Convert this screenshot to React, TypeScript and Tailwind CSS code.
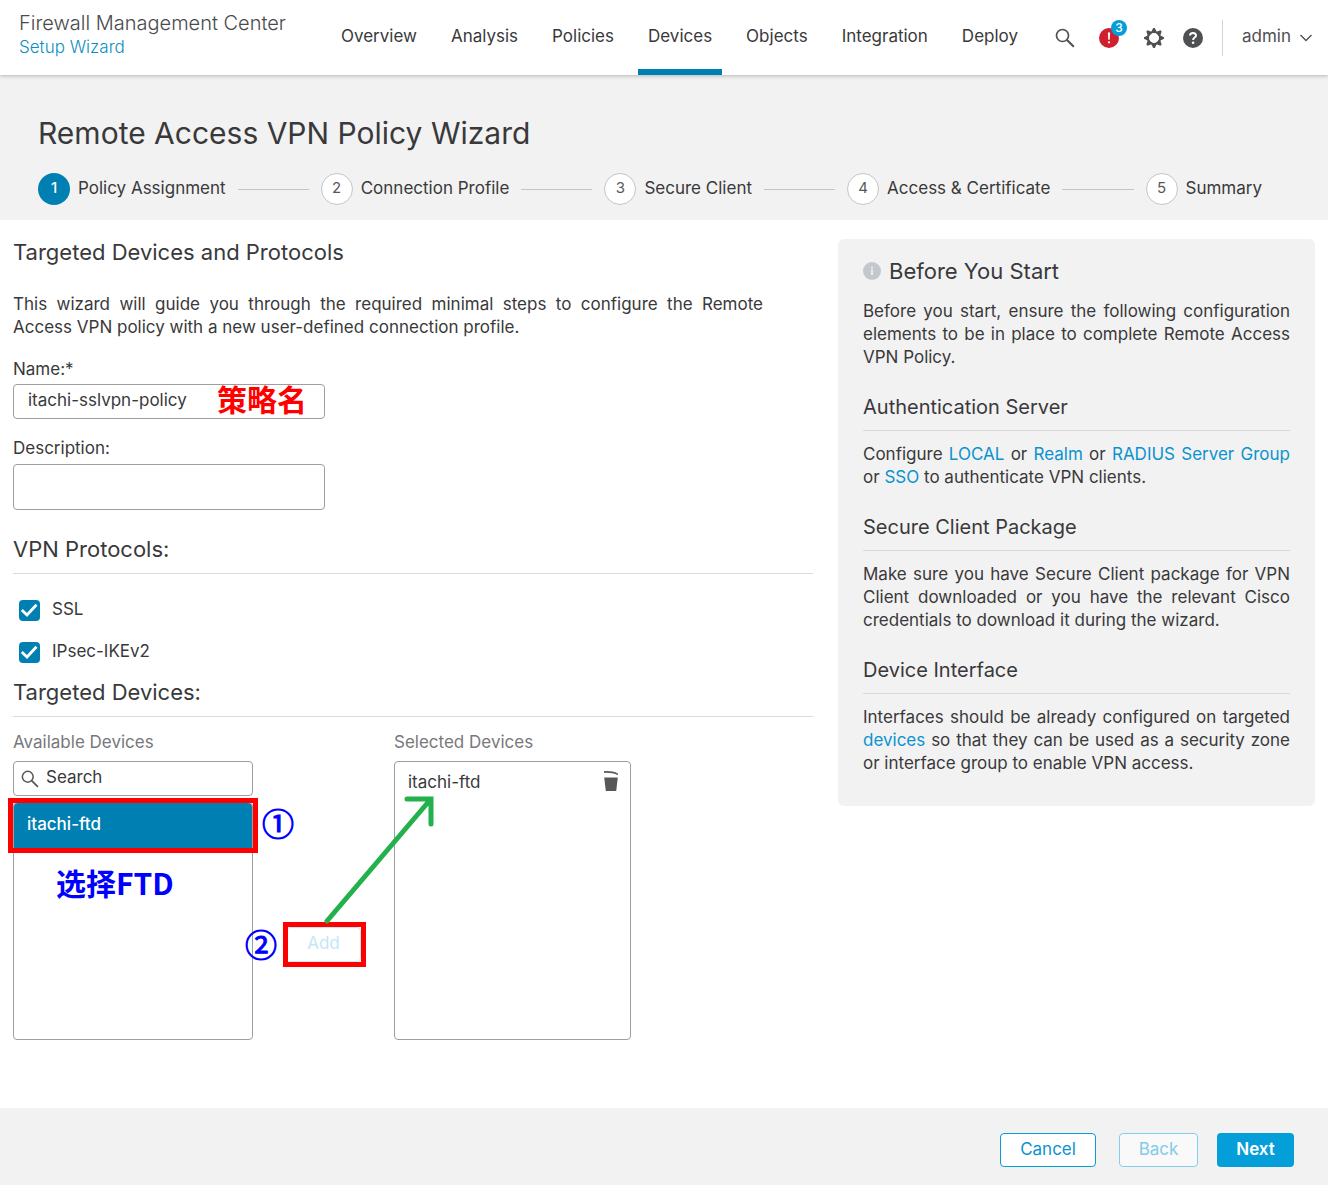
import React from "react";

const navItems = ["Overview", "Analysis", "Policies", "Devices", "Objects", "Integration", "Deploy"];
const steps = ["Policy Assignment", "Connection Profile", "Secure Client", "Access & Certificate", "Summary"];

function SearchIcon({ className }: { className: string }) {
  return (
    <svg viewBox="0 0 20 20" className={className} fill="none" stroke="currentColor" aria-hidden="true">
      <circle cx="7.5" cy="7.5" r="6" strokeWidth="1.7" />
      <path d="M11.8 11.8 18.8 18.8" strokeWidth="2" />
    </svg>
  );
}

function AlertIcon() {
  return (
    <svg viewBox="0 0 20 20" className="size-5" aria-hidden="true">
      <circle cx="10" cy="10" r="10" fill="#cf2030" />
      <path d="M8.9 4.5h2.2l-.4 7.3H9.3z" fill="#fff" />
      <circle cx="10" cy="14.3" r="1.1" fill="#fff" />
    </svg>
  );
}

function GearIcon() {
  return (
    <svg viewBox="0 0 20 20" className="size-5" fill="currentColor" aria-hidden="true">
      <g>
        {[0, 45, 90, 135, 180, 225, 270, 315].map((a) => (
          <path key={a} d="M9.2 0h1.6l2.5 5H6.7z" transform={`rotate(${a} 10 10)`} />
        ))}
      </g>
      <circle cx="10" cy="10" r="5.8" fill="none" stroke="currentColor" strokeWidth="1.8" />
      <circle cx="10" cy="10" r="4.7" fill="#fff" />
    </svg>
  );
}

function HelpIcon() {
  return (
    <svg viewBox="0 0 20 20" className="size-5" aria-hidden="true">
      <circle cx="10" cy="10" r="10" fill="currentColor" />
      <path d="M7 7.6C7 5.8 8.3 4.9 10 4.9s3 .9 3 2.5c0 2.2-2.9 2.2-2.9 4.6" fill="none" stroke="#fff" strokeWidth="2" />
      <circle cx="10.1" cy="14.8" r="1.3" fill="#fff" />
    </svg>
  );
}

function InfoIcon() {
  return (
    <svg viewBox="0 0 18 18" className="size-[18px]" aria-hidden="true">
      <circle cx="9" cy="9" r="9" fill="#c4c7cc" />
      <path d="M8.1 7.5h1.8V13H8.1zM8.1 4.8h1.8v1.6H8.1z" fill="#f2f2f2" />
    </svg>
  );
}

function TrashIcon() {
  return (
    <svg viewBox="0 0 16 20" className="h-5 w-4" fill="currentColor" aria-hidden="true">
      <path d="M1 0.2C6-.2 11 .6 15 2.4v1.5C11 2.4 6 1.6 1 1.9z" />
      <path d="M1.2 6.6h13.6L13.2 20H2.8z" />
    </svg>
  );
}

function Protocol({ id, label }: { id: string; label: string }) {
  return (
    <div className="flex h-[21px] items-center gap-3">
      <span className="grid size-[21px]">
        <input
          id={id}
          type="checkbox"
          defaultChecked
          className="col-start-1 row-start-1 size-[21px] appearance-none rounded bg-[#0080b2]"
        />
        <svg viewBox="0 0 21 21" className="pointer-events-none col-start-1 row-start-1 size-[21px]" aria-hidden="true">
          <path d="M2.8 10 8 15 17.5 4.8" fill="none" stroke="#fff" strokeWidth="2.8" />
        </svg>
      </span>
      <label htmlFor={id} className="pb-0.5">
        {label}
      </label>
    </div>
  );
}

function SectionTitle({ children }: { children: React.ReactNode }) {
  return <h2 className="border-b border-[#dadbdd] pb-[10px] text-[22px] leading-7">{children}</h2>;
}

function HelpSection({ title, children }: { title: string; children: React.ReactNode }) {
  return (
    <section className="mt-[26px]">
      <h3 className="border-b border-[#d8d9db] pb-[11px] text-[20px] leading-6">{title}</h3>
      <p className="mt-3 text-justify">{children}</p>
    </section>
  );
}

function Link({ children }: { children: React.ReactNode }) {
  return (
    <a href="#" className="text-[#0a93cf]">
      {children}
    </a>
  );
}

export default function App() {
  return (
    <div className="min-h-screen bg-white font-['Inter','Noto_Sans_CJK_SC',sans-serif] text-[17px] leading-[23px] text-[#39393b]">
      <header className="relative flex h-[75px] bg-white pr-4 pl-[19px] shadow-[0_1px_4px_rgba(0,0,0,0.25)]">
        <div className="pt-[10px]">
          <div className="text-[20px] leading-[26px] font-light text-[#4a4a4c]">Firewall Management Center</div>
          <a href="#" className="block leading-[22px] font-light text-[#0a8fc4]">
            Setup Wizard
          </a>
        </div>
        <nav className="ml-auto flex gap-[14px]">
          {navItems.map((item) => (
            <a
              key={item}
              href="#"
              className={
                item === "Devices"
                  ? "border-b-[6px] border-[#0080b2] px-[10px] pt-[25px]"
                  : "border-b-[6px] border-transparent px-[10px] pt-[25px]"
              }
            >
              {item}
            </a>
          ))}
        </nav>
        <div className="ml-[27px] flex h-[75px] items-center text-[#4f5052]">
          <button type="button" aria-label="Search">
            <SearchIcon className="size-5" />
          </button>
          <button type="button" aria-label="Notifications" className="relative ml-6">
            <AlertIcon />
            <span className="absolute -top-[8px] left-[12px] size-4 rounded-full bg-[#049fd9] text-center text-[12px] leading-4 font-medium text-white">
              3
            </span>
          </button>
          <button type="button" aria-label="Settings" className="ml-[25px]">
            <GearIcon />
          </button>
          <button type="button" aria-label="Help" className="ml-[19px]">
            <HelpIcon />
          </button>
          <button type="button" className="ml-[19px] flex h-9 items-center gap-[9px] border-l border-[#d4d5d7] pl-[19px]">
            <span className="pb-0.5">admin</span>
            <svg viewBox="0 0 12 8" className="h-2 w-3" fill="none" stroke="currentColor" strokeWidth="1.3" aria-hidden="true">
              <path d="M.5 1 6 6.5 11.5 1" />
            </svg>
          </button>
        </div>
      </header>

      <div className="bg-[#f2f2f2] px-[38px] pt-[38px] pb-[15px]">
        <h1 className="text-[30px] leading-10">Remote Access VPN Policy Wizard</h1>
        <ol className="mt-5 mr-7 flex items-center">
          {steps.map((step, i) => (
            <React.Fragment key={step}>
              {i > 0 && <li role="presentation" className="mx-3 h-px flex-1 bg-[#c4c5c7]" />}
              <li className="flex items-center gap-2">
                <span
                  className={
                    i === 0
                      ? "size-8 rounded-full bg-[#0080b2] text-center text-[15px] leading-[30px] font-medium text-white"
                      : "size-8 rounded-full border border-[#c4c5c7] bg-white text-center text-[15px] leading-[28px] text-[#58585b]"
                  }
                >
                  {i + 1}
                </span>
                <span className="pb-0.5">{step}</span>
              </li>
            </React.Fragment>
          ))}
        </ol>
      </div>

      <main className="grid grid-cols-[minmax(0,1fr)_477px] items-start gap-[25px] px-[13px] pt-[19px] pb-[68px]">
        <div>
          <h2 className="text-[22px] leading-[26px]">Targeted Devices and Protocols</h2>
          <p className="mt-7 max-w-[750px] text-justify">
            This wizard will guide you through the required minimal steps to configure the Remote Access VPN policy
            with a new user-defined connection profile.
          </p>

          <label htmlFor="name" className="mt-[19px] block">
            Name:*
          </label>
          <div className="relative mt-[3px] w-[312px]">
            <input
              id="name"
              type="text"
              defaultValue="itachi-sslvpn-policy"
              className="block h-[35px] w-full rounded border border-[#9e9ea2] bg-white px-[14px] pb-1"
            />
            <span className="absolute top-0 left-[204px] text-[30px] leading-8 font-bold text-[#ff0000]">策略名</span>
          </div>

          <label htmlFor="description" className="mt-[18px] block">
            Description:
          </label>
          <textarea
            id="description"
            className="mt-1 block h-[46px] w-[312px] resize-none rounded border border-[#9e9ea2] bg-white px-[14px] py-2"
          />

          <div className="mt-[25px]">
            <SectionTitle>VPN Protocols:</SectionTitle>
          </div>
          <div className="mt-[26px] flex flex-col gap-[21px] pl-[6px]">
            <Protocol id="ssl" label="SSL" />
            <Protocol id="ikev2" label="IPsec-IKEv2" />
          </div>

          <div className="mt-[15px]">
            <SectionTitle>Targeted Devices:</SectionTitle>
          </div>

          <div className="relative mt-[14px] flex">
            <div className="w-[240px]">
              <label htmlFor="device-search" className="block text-[#77787b]">
                Available Devices
              </label>
              <div className="mt-[7px] flex h-[35px] items-center gap-[7px] rounded border border-[#9e9ea2] pl-[7px] text-[#58585b]">
                <SearchIcon className="size-[18px]" />
                <input
                  id="device-search"
                  type="search"
                  placeholder="Search"
                  className="min-w-0 flex-1 bg-transparent pb-0.5 placeholder:text-[#39393b]"
                />
              </div>
              <div className="mt-[6px] h-[238px] rounded border border-[#9e9ea2]">
                <button
                  type="button"
                  className="block h-[46px] w-full rounded-t-sm bg-[#0080b2] px-[13px] pb-1 text-left font-medium text-white"
                >
                  itachi-ftd
                </button>
              </div>
            </div>

            <div className="flex w-[141px] justify-center pt-[196px]">
              <button
                type="button"
                disabled
                className="h-[35px] w-[75px] rounded border border-[#c9e9f6] bg-white pb-0.5 text-[#c3e7f6]"
              >
                Add
              </button>
            </div>

            <div className="w-[237px]">
              <div className="text-[#77787b]">Selected Devices</div>
              <div className="mt-[7px] h-[279px] rounded border border-[#9e9ea2]">
                <div className="flex items-start justify-between pt-[9px] pr-[11px] pl-[13px]">
                  itachi-ftd
                  <button type="button" aria-label="Remove itachi-ftd" className="text-[#58585b]">
                    <TrashIcon />
                  </button>
                </div>
              </div>
            </div>

            <div className="pointer-events-none absolute top-[67px] -left-[5px] h-[55px] w-[250px] border-[5px] border-[#ff0000]" />
            <div className="pointer-events-none absolute top-[191px] left-[270px] h-[45px] w-[83px] border-[5px] border-[#ff0000]" />
            <span className="absolute top-[75px] left-[249px] font-['Noto_Sans_CJK_SC',sans-serif] text-[32px] leading-8 text-[#0000ff] [-webkit-text-stroke:1px_#0000ff]">
              ①
            </span>
            <span className="absolute top-[196px] left-[232px] font-['Noto_Sans_CJK_SC',sans-serif] text-[32px] leading-8 text-[#0000ff] [-webkit-text-stroke:1px_#0000ff]">
              ②
            </span>
            <span className="absolute top-[135px] left-[43px] font-['Noto_Sans_CJK_SC',sans-serif] text-[30px] leading-8 font-bold text-[#0000ff]">
              选择FTD
            </span>
            <svg
              viewBox="0 0 112 130"
              className="pointer-events-none absolute top-[63px] left-[310px] h-[130px] w-28"
              fill="none"
              stroke="#22b14c"
              strokeWidth="5"
              strokeLinecap="round"
              aria-hidden="true"
            >
              <path d="M4 127 107 6M84 5h24v25" />
            </svg>
          </div>
        </div>

        <aside className="rounded-md bg-[#f2f2f2] px-[25px] pt-[19px] pb-[31px]">
          <h2 className="flex items-center gap-2 text-[22px] leading-[26px]">
            <InfoIcon />
            Before You Start
          </h2>
          <p className="mt-4 text-justify">
            Before you start, ensure the following configuration elements to be in place to complete Remote Access VPN
            Policy.
          </p>
          <HelpSection title="Authentication Server">
            Configure <Link>LOCAL</Link> or <Link>Realm</Link> or <Link>RADIUS Server Group</Link> or <Link>SSO</Link>{" "}
            to authenticate VPN clients.
          </HelpSection>
          <HelpSection title="Secure Client Package">
            Make sure you have Secure Client package for VPN Client downloaded or you have the relevant Cisco
            credentials to download it during the wizard.
          </HelpSection>
          <HelpSection title="Device Interface">
            Interfaces should be already configured on targeted <Link>devices</Link> so that they can be used as a
            security zone or interface group to enable VPN access.
          </HelpSection>
        </aside>
      </main>

      <footer className="flex justify-end bg-[#f2f2f2] px-[34px] pt-[25px] pb-[18px]">
        <button type="button" className="h-[34px] w-24 rounded border border-[#049fd9] bg-white pb-0.5 text-[#0a93cf]">
          Cancel
        </button>
        <button
          type="button"
          disabled
          className="ml-[23px] h-[34px] w-[79px] rounded border border-[#82cfec] bg-[#f9f9f9] pb-0.5 text-[#82cbe8]"
        >
          Back
        </button>
        <button type="button" className="ml-[19px] h-[34px] w-[77px] rounded bg-[#049fd9] pb-0.5 font-semibold text-white">
          Next
        </button>
      </footer>
    </div>
  );
}
